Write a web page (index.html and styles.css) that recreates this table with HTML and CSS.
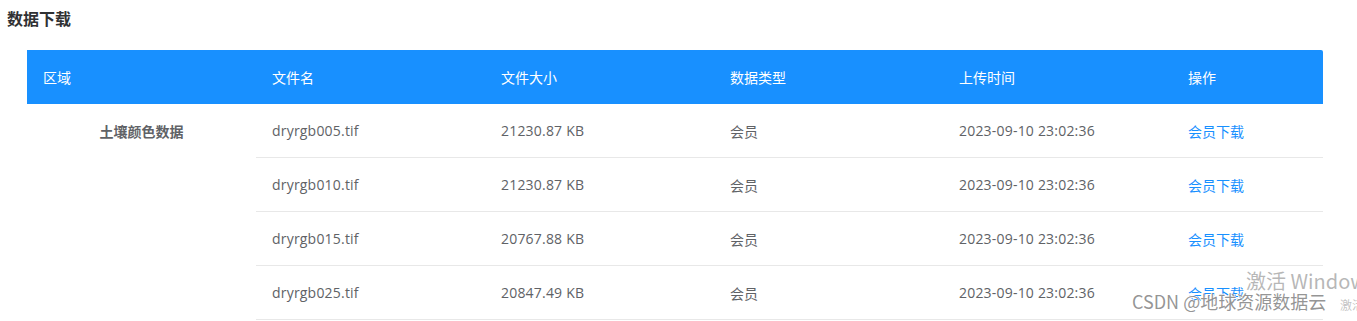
FILE: index.html
```html
<!DOCTYPE html>
<html lang="zh">
<head>
<meta charset="utf-8">
<link rel="stylesheet" href="styles.css">
</head>
<body>
<div class="page">
  <h2 class="title">数据下载</h2>
  <div class="table">
    <div class="thead">
      <div class="th">区域</div>
      <div class="th">文件名</div>
      <div class="th">文件大小</div>
      <div class="th">数据类型</div>
      <div class="th">上传时间</div>
      <div class="th">操作</div>
    </div>
    <div class="tbody">
      <div class="region">土壤颜色数据</div>
      <div class="rows">
        <div class="row"><div class="td">dryrgb005.tif</div><div class="td">21230.87 KB</div><div class="td">会员</div><div class="td">2023-09-10 23:02:36</div><div class="td link">会员下载</div></div>
        <div class="row"><div class="td">dryrgb010.tif</div><div class="td">21230.87 KB</div><div class="td">会员</div><div class="td">2023-09-10 23:02:36</div><div class="td link">会员下载</div></div>
        <div class="row"><div class="td">dryrgb015.tif</div><div class="td">20767.88 KB</div><div class="td">会员</div><div class="td">2023-09-10 23:02:36</div><div class="td link">会员下载</div></div>
        <div class="row"><div class="td">dryrgb025.tif</div><div class="td">20847.49 KB</div><div class="td">会员</div><div class="td">2023-09-10 23:02:36</div><div class="td link">会员下载</div></div>
      </div>
    </div>
  </div>
</div>
<div class="wm-win">激活 Windows</div>
<div class="wm-csdn">CSDN @地球资源数据云</div>
<div class="wm-small">激活</div>
</body>
</html>
```
FILE: styles.css
```css
html, body {
  margin: 0;
  padding: 0;
  background: #ffffff;
  overflow: hidden;
}
body {
  font-family: "Segoe UI", "Open Sans", "Noto Sans CJK SC", sans-serif;
  color: #606266;
  font-size: 14px;
  width: 1357px;
  height: 321px;
  position: relative;
}
.page {
  padding: 0 0 0 7px;
}
.title {
  margin: 0;
  padding-top: 8px;
  height: 50px;
  box-sizing: border-box;
  font-family: "Noto Sans CJK SC", sans-serif;
  font-size: 16px;
  line-height: 20px;
  font-weight: 700;
  color: #303133;
}
.table {
  margin-left: 20px;
  width: 1296px;
}
.thead {
  display: grid;
  grid-template-columns: 229px 229px 229px 229px 229px 151px;
  height: 54px;
  background: #1890ff;
  border-top-right-radius: 2px;
  align-items: center;
}
.th {
  padding-left: 16px;
  color: #ffffff;
  font-family: "Noto Sans CJK SC", sans-serif;
  font-size: 14px;
}
.tbody {
  display: flex;
}
.region {
  width: 229px;
  flex: none;
  height: 54px;
  display: flex;
  align-items: center;
  justify-content: center;
  font-family: "Noto Sans CJK SC", sans-serif;
  font-weight: 700;
  font-size: 14px;
  color: #606266;
}
.rows {
  flex: 1;
}
.row {
  display: grid;
  grid-template-columns: 229px 229px 229px 229px 151px;
  height: 54px;
  box-sizing: border-box;
  border-bottom: 1px solid #e8e8e8;
  align-items: center;
}
.td {
  padding-left: 16px;
  letter-spacing: 0.2px;
}
.td:nth-child(3), .link {
  font-family: "Noto Sans CJK SC", sans-serif;
  font-size: 14px;
  letter-spacing: 0;
}
.link {
  color: #1890ff;
}
.wm-win {
  position: absolute;
  left: 1246px;
  top: 266px;
  font-family: "Noto Sans CJK SC", sans-serif;
  font-size: 20px;
  color: rgba(160, 160, 160, 0.75);
  white-space: nowrap;
}
.wm-csdn {
  position: absolute;
  left: 1132px;
  top: 288px;
  font-family: "Noto Sans CJK SC", sans-serif;
  font-size: 18px;
  color: rgba(130, 130, 130, 0.85);
  text-shadow: 1px 1px 0 #fff, -1px -1px 0 #fff;
  white-space: nowrap;
}
.wm-small {
  position: absolute;
  left: 1340px;
  top: 296px;
  font-family: "Noto Sans CJK SC", sans-serif;
  font-size: 12px;
  color: rgba(170, 170, 170, 0.7);
  white-space: nowrap;
}
```
